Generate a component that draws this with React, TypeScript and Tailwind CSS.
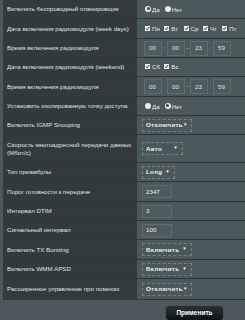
import React from 'react';

const font = { fontFamily: '"Liberation Sans", Arial, sans-serif' };

function Radio({ on, label }: { on: boolean; label: string }) {
  return (
    <span className="flex items-center gap-[1px] mr-[5px]">
      {on ? (
        <span className="w-[6px] h-[6px] rounded-full bg-[#e8ecec] flex items-center justify-center">
          <span className="w-[3px] h-[3px] rounded-full bg-[#3a4447]"></span>
        </span>
      ) : (
        <span className="w-[6px] h-[6px] rounded-full bg-[#e8ecec]"></span>
      )}
      <span className="text-[6.2px] text-[#e6eaea] mt-[2px]">{label}</span>
    </span>
  );
}

function Check({ label }: { label: string }) {
  return (
    <span className="flex items-center gap-[2px] w-[19.3px] shrink-0">
      <span className="w-[5px] h-[5px] bg-[#eef0f0] flex items-center justify-center">
        <svg width="5" height="5" viewBox="0 0 5 5">
          <path d="M1 2.5 L2 3.7 L4.2 1" stroke="#2a3033" strokeWidth="1" fill="none" />
        </svg>
      </span>
      <span className="text-[6.2px] text-[#e6eaea]">{label}</span>
    </span>
  );
}

function TimeBox({ v }: { v: string }) {
  return (
    <span className="w-[18px] h-[15px] border border-[#5f6d71] bg-[#4d5a5e] text-[6.2px] text-[#dfe6e7] flex items-center pl-[4px]">
      {v}
    </span>
  );
}

function TimeRow() {
  return (
    <div className="flex items-center">
      <TimeBox v="00" />
      <span className="w-[5px] text-center text-[6px] text-[#aab4b6]">:</span>
      <TimeBox v="00" />
      <span className="w-[5px] text-center text-[6px] text-[#dfe6e7]">-</span>
      <TimeBox v="23" />
      <span className="w-[5px] text-center text-[6px] text-[#aab4b6]">:</span>
      <TimeBox v="59" />
    </div>
  );
}

function Select({ v, w }: { v: string; w: string }) {
  return (
    <span
      className={`${w} h-[13px] border border-dashed border-[#718084] bg-[#4a575b] flex items-center justify-between pl-[3px] pr-[4px] text-[6.2px] font-bold tracking-[0.3px] text-[#eef2f2]`}
    >
      <span>{v}</span>
      <span className="text-[4.5px]">▼</span>
    </span>
  );
}

function TextBox({ v }: { v: string }) {
  return (
    <span className="w-[30px] h-[13px] border border-[#5f6d71] bg-[#4d5a5e] flex items-center pl-[3px] text-[6.2px] text-[#eef2f2]">
      {v}
    </span>
  );
}

const rows: { label: React.ReactNode; ctrl: React.ReactNode; h: string }[] = [
  {
    label: 'Включить беспроводный планировщик',
    ctrl: (
      <div className="flex pl-[8px]">
        <Radio on label="Да" />
        <Radio on={false} label="Нет" />
      </div>
    ),
    h: 'h-[19px]',
  },
  {
    label: 'Дата включения радиомодуля (week days)',
    ctrl: (
      <div className="flex pl-[8px]">
        <Check label="Пн" />
        <Check label="Вт" />
        <Check label="Ср" />
        <Check label="Чт" />
        <Check label="Пт" />
      </div>
    ),
    h: 'h-[20px]',
  },
  { label: 'Время включения радиомодуля', ctrl: <div className="pl-[7px]"><TimeRow /></div>, h: 'h-[19px]' },
  {
    label: 'Дата включения радиомодуля (weekend)',
    ctrl: (
      <div className="flex pl-[8px]">
        <Check label="Сб" />
        <Check label="Вс" />
      </div>
    ),
    h: 'h-[19px]',
  },
  { label: 'Время включения радиомодуля', ctrl: <div className="pl-[7px]"><TimeRow /></div>, h: 'h-[20px]' },
  {
    label: 'Установить изолированную точку доступа',
    ctrl: (
      <div className="flex pl-[8px]">
        <Radio on={false} label="Да" />
        <Radio on label="Нет" />
      </div>
    ),
    h: 'h-[19px]',
  },
  { label: 'Включить IGMP Snooping', ctrl: <div className="pl-[5px]"><Select v="Отключить" w="w-[50px]" /></div>, h: 'h-[19px]' },
  {
    label: (
      <span className="leading-[8px] whitespace-nowrap">
        Скорость многоадресной передачи данных
        <br />
        (Мбит/с)
      </span>
    ),
    ctrl: <div className="pl-[5px]"><Select v="Авто" w="w-[41px]" /></div>,
    h: 'h-[28px]',
  },
  { label: 'Тип преамбулы', ctrl: <div className="pl-[5px]"><Select v="Long" w="w-[33px]" /></div>, h: 'h-[19px]' },
  { label: 'Порог готовности к передаче', ctrl: <div className="pl-[5px]"><TextBox v="2347" /></div>, h: 'h-[20px]' },
  { label: 'Интервал DTIM', ctrl: <div className="pl-[5px]"><TextBox v="3" /></div>, h: 'h-[19px]' },
  { label: 'Сигнальный интервал', ctrl: <div className="pl-[5px]"><TextBox v="100" /></div>, h: 'h-[19px]' },
  { label: 'Включить TX Bursting', ctrl: <div className="pl-[5px]"><Select v="Включить" w="w-[50px]" /></div>, h: 'h-[20px]' },
  { label: 'Включить WMM APSD', ctrl: <div className="pl-[5px]"><Select v="Включить" w="w-[50px]" /></div>, h: 'h-[19px]' },
  { label: 'Расширенное управление при помехах', ctrl: <div className="pl-[5px]"><Select v="Отключить" w="w-[50px]" /></div>, h: 'h-[21px]' },
];

export default function App() {
  return (
    <div className="w-[245px] h-[320px] bg-[#4c585c] overflow-hidden" style={font}>
      <div className="ml-[3px]">
        {rows.map((r, i) => (
          <div key={i} className={`grid grid-cols-[134px_1fr] ${r.h} border-b border-[#2e3639]`}>
            <div className="bg-[#323a3e] flex items-center pl-[4px] text-[6.2px] text-[#dfe4e5]">{r.label}</div>
            <div className="bg-[#4b585c] flex items-center">{r.ctrl}</div>
          </div>
        ))}
      </div>
      <div className="flex pl-[165px] pt-[5px]">
        <button className="w-[59px] h-[16px] rounded-[4px] bg-gradient-to-b from-[#2c3235] to-[#0e1214] border border-[#4a5356] text-[6.5px] font-bold text-white">
          Применить
        </button>
      </div>
    </div>
  );
}
